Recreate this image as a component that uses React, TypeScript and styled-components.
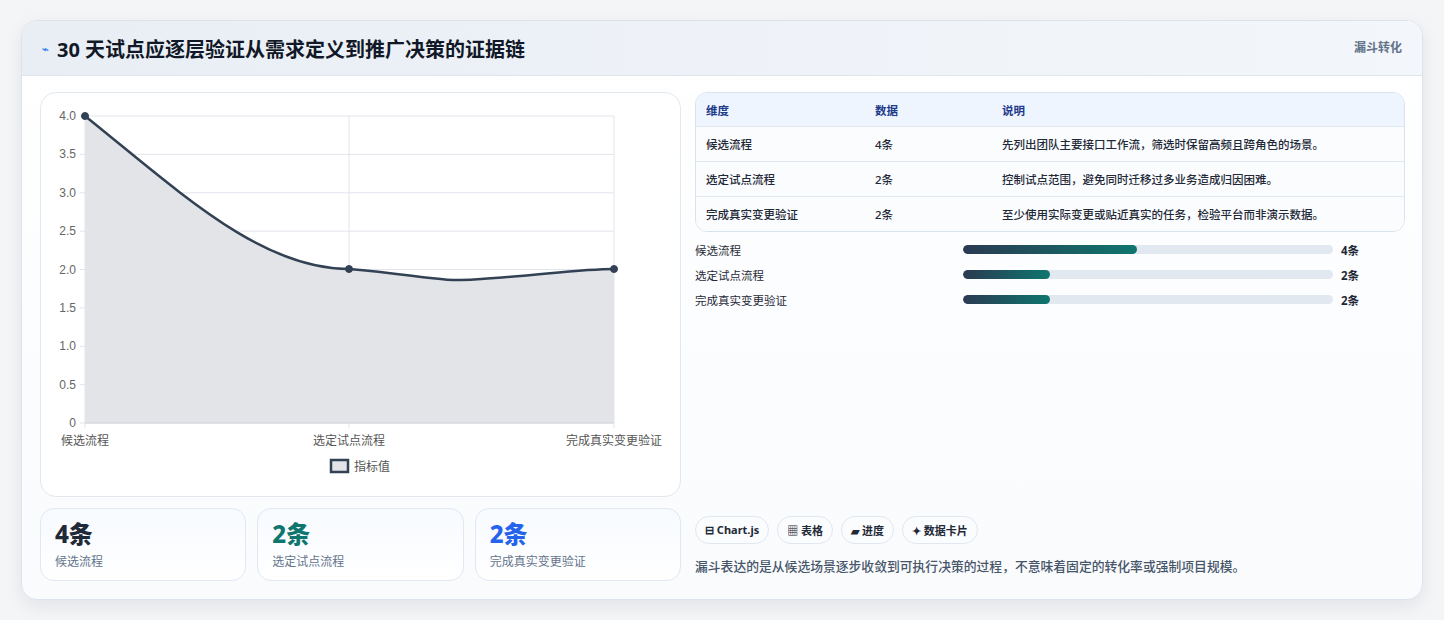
import React from "react";
import styled, { createGlobalStyle } from "styled-components";

const Global = createGlobalStyle`
  body { margin:0; background:#f4f5f7; font-family:"Noto Sans","Noto Sans CJK SC",sans-serif; }
`;
const Page = styled.div`padding:20px 21px 21px 21px;`;
const Card = styled.div`
  background:linear-gradient(180deg,#ffffff,#f9fbfd); border:1px solid #dde3ec; border-radius:16px;
  box-shadow:0 6px 18px rgba(15,23,42,0.08); overflow:hidden; height:578px; display:flex; flex-direction:column;
`;
const Header = styled.div`
  height:54px; display:flex; align-items:center; justify-content:space-between; padding:0 20px;
  background:linear-gradient(90deg,#e9eef5,#f3f6fa); border-bottom:1px solid #dfe5ee;
`;
const Title = styled.h1`
  margin:0; font-size:20px; font-weight:700; color:#111827; display:flex; align-items:center; gap:8px;
`;
const Icon = styled.span`color:#3b82f6; font-size:11px;`;
const Tag = styled.span`font-size:12px; font-weight:700; color:#64748b; align-self:flex-start; margin-top:17px;`;
const Body = styled.div`flex:1; display:grid; grid-template-columns:641px 710px; gap:14px; padding:16px 18px 18px 18px;`;
const Left = styled.div`display:flex; flex-direction:column; gap:11px;`;
const ChartCard = styled.div`height:403px; border:1px solid #e3e8ef; border-radius:16px; background:#fff;`;
const Stats = styled.div`display:grid; grid-template-columns:repeat(3,1fr); gap:11px;`;
const Stat = styled.div`height:73px; border:1px solid #e0e8f3; border-radius:14px; background:linear-gradient(180deg,#f7faff,#fff); padding:11px 14px; box-sizing:border-box;`;
const StatVal = styled.div<{ $c: string }>`font-size:24px; font-weight:800; color:${p => p.$c}; line-height:28px;`;
const StatLbl = styled.div`font-size:12px; color:#64748b; margin-top:4px;`;
const Right = styled.div`display:flex; flex-direction:column;`;
const Table = styled.div`border:1px solid #d9e3ef; border-radius:12px; overflow:hidden; background:#fff;`;
const Row = styled.div<{ $head?: boolean }>`
  display:grid; grid-template-columns:169px 127px 1fr; padding:0 10px; align-items:center;
  height:${p => p.$head ? 33 : 34}px; font-size:11.5px;
  color:${p => p.$head ? "#1e3a8a" : "#1f2937"}; font-weight:${p => p.$head ? 700 : 500};
  background:${p => p.$head ? "#eef5ff" : "#fafcfe"};
  & + & { border-top:1px solid #e1e7ef; }
`;
const Bars = styled.div`display:flex; flex-direction:column; gap:8px; margin-top:9px;`;
const BarRow = styled.div`display:grid; grid-template-columns:268px 370px 1fr; align-items:center; font-size:11.5px; color:#1f2937; height:17px;`;
const Track = styled.div`height:9px; background:#e2e8f0; border-radius:5px; overflow:hidden;`;
const Fill = styled.div`height:100%; border-radius:5px; background:linear-gradient(90deg,#2b3a52,#0f766e);`;
const BarVal = styled.span`font-weight:700; padding-left:8px;`;
const Spacer = styled.div`flex:1;`;
const Chips = styled.div`display:flex; gap:8px;`;
const Chip = styled.span`font-size:11px; font-weight:700; color:#1f2937; border:1px solid #e2e8f0; background:#fbfcfe; border-radius:14px; padding:5px 9px;`;
const Note = styled.p`margin:12px 0 6px 0; font-size:12.8px; color:#475569; font-weight:500;`;

const yl = ["4.0","3.5","3.0","2.5","2.0","1.5","1.0","0.5","0"];

function Chart() {
  const L = 44, T = 23, R = 573, B = 330, step = (B - T) / 8;
  return (
    <svg width="640" height="403" style={{ display: "block" }}>
      {yl.map((l, i) => (
        <g key={l}>
          <line x1={L - 5} x2={R} y1={T + i * step} y2={T + i * step} stroke="#e1e4ec" />
          <text x={L - 9} y={T + i * step + 4} textAnchor="end" fontSize="12" fill="#666" fontFamily="Liberation Sans">{l}</text>
        </g>
      ))}
      {[L, 308, R].map(x => <line key={x} x1={x} x2={x} y1={T} y2={B + 5} stroke="#e1e4ec" />)}
      <path d="M44,23 C140,100 220,176 308,176 C380,182 400,190 440,186 C500,182 540,176 573,176 L573,330 L44,330 Z" fill="#e2e4e7" />
      <line x1={L} x2={R} y1={B} y2={B} stroke="#cfd4da" />
      <path d="M44,23 C140,100 220,176 308,176 C380,182 400,190 440,186 C500,182 540,176 573,176" fill="none" stroke="#334155" strokeWidth="2.5" />
      {[[44,23],[308,176],[573,176]].map(([x,y]) => <circle key={x} cx={x} cy={y} r="3.5" fill="#334155" stroke="#334155" strokeWidth="1" />)}
      {[["候选流程",L],["选定试点流程",308],["完成真实变更验证",R]].map(([t,x]) => (
        <text key={t as string} x={x as number} y={352} textAnchor="middle" fontSize="12" fill="#555">{t}</text>
      ))}
      <rect x="290" y="367" width="17" height="12" fill="#e2e4e7" stroke="#334155" strokeWidth="2.5" />
      <text x="313" y="378" fontSize="12" fill="#555">指标值</text>
    </svg>
  );
}

const rows = [
  ["候选流程","4条","先列出团队主要接口工作流，筛选时保留高频且跨角色的场景。",0.47],
  ["选定试点流程","2条","控制试点范围，避免同时迁移过多业务造成归因困难。",0.235],
  ["完成真实变更验证","2条","至少使用实际变更或贴近真实的任务，检验平台而非演示数据。",0.235],
] as const;

export default function App() {
  return (
    <Page>
      <Global />
      <Card>
        <Header>
          <Title><Icon>⌁</Icon>30 天试点应逐层验证从需求定义到推广决策的证据链</Title>
          <Tag>漏斗转化</Tag>
        </Header>
        <Body>
          <Left>
            <ChartCard><Chart /></ChartCard>
            <Stats>
              <Stat><StatVal $c="#1f2937">4条</StatVal><StatLbl>候选流程</StatLbl></Stat>
              <Stat><StatVal $c="#0f766e">2条</StatVal><StatLbl>选定试点流程</StatLbl></Stat>
              <Stat><StatVal $c="#2563eb">2条</StatVal><StatLbl>完成真实变更验证</StatLbl></Stat>
            </Stats>
          </Left>
          <Right>
            <Table>
              <Row $head><span>维度</span><span>数据</span><span>说明</span></Row>
              {rows.map(r => <Row key={r[0]}><span>{r[0]}</span><span>{r[1]}</span><span>{r[2]}</span></Row>)}
            </Table>
            <Bars>
              {rows.map(r => (
                <BarRow key={r[0]}><span>{r[0]}</span><Track><Fill style={{ width: `${r[3] * 100}%` }} /></Track><BarVal>{r[1]}</BarVal></BarRow>
              ))}
            </Bars>
            <Spacer />
            <Chips><Chip>⊟ Chart.js</Chip><Chip>▦ 表格</Chip><Chip>▰ 进度</Chip><Chip>✦ 数据卡片</Chip></Chips>
            <Note>漏斗表达的是从候选场景逐步收敛到可执行决策的过程，不意味着固定的转化率或强制项目规模。</Note>
          </Right>
        </Body>
      </Card>
    </Page>
  );
}
